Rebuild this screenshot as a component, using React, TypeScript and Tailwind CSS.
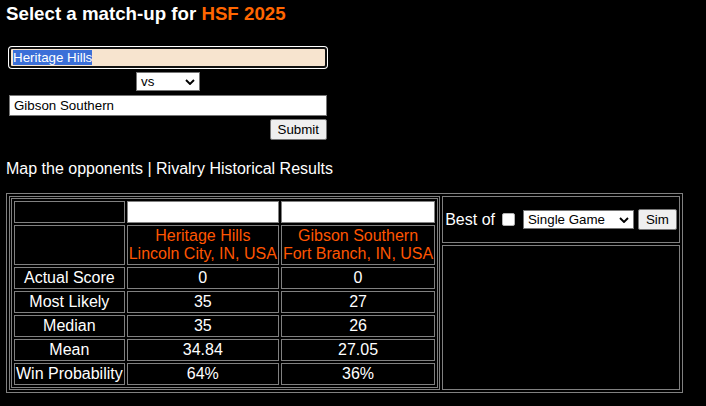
import React from 'react';

const teams = [
  { name: 'Heritage Hills', place: 'Lincoln City, IN, USA' },
  { name: 'Gibson Southern', place: 'Fort Branch, IN, USA' },
];

const stats = [
  ['Actual Score', '0', '0'],
  ['Most Likely', '35', '27'],
  ['Median', '35', '26'],
  ['Mean', '34.84', '27.05'],
  ['Win Probability', '64%', '36%'],
];

const Chevron = () => (
  <svg width="10" height="6" viewBox="0 0 10 6" className="pointer-events-none absolute right-[4px] top-1/2 -translate-y-1/2">
    <path d="M1 1 L5 5 L9 1" fill="none" stroke="#000" strokeWidth="1.9" />
  </svg>
);

const FakeSelect = ({ label, width }: { label: string; width: string }) => (
  <div className={`relative h-[19px] ${width} border border-[#767676] bg-white text-black text-[13.333px] leading-[17px] pl-[4px]`}>
    {label}
    <Chevron />
  </div>
);

const Button = ({ label }: { label: string }) => (
  <button className="block h-[21px] px-[7px] border border-[#767676] rounded-[2px] bg-[#efefef] text-black text-[13.333px] leading-[17px]">
    {label}
  </button>
);

const cell = 'border border-[#808080] p-px';

const App = () => {
  return (
    <div className="w-[706px] h-[406px] overflow-hidden bg-black text-white font-['Liberation_Sans',Arial,sans-serif] pl-[6px]">
      <h3 className="pt-[3px] text-[18.72px] leading-[22px] font-bold">
        Select a match-up for <span className="text-[#ff6600]">HSF 2025</span>
      </h3>

      <form className="ml-[3px] mt-[22px] w-[318px] flex flex-col" onSubmit={(e) => e.preventDefault()}>
        <div className="h-[21px] border-2 border-[#101010] rounded-[3px] ring-1 ring-white bg-[#f7e4cf] text-[13.333px] leading-[16px] pl-[2px] pt-px text-white">
          <span className="bg-[#3b6fd8]">Heritage Hills</span>
        </div>
        <div className="mt-[4px] self-center flex">
          <FakeSelect label="vs" width="w-[64px]" />
        </div>
        <div className="mt-[4px] h-[21px] border border-[#767676] bg-white text-black text-[13.333px] leading-[17px] pl-[4px] pt-px">
          Gibson Southern
        </div>
        <div className="mt-[3px] self-end flex">
          <Button label="Submit" />
        </div>
      </form>

      <div className="mt-[20px] text-[16px] leading-[18px]">
        Map the opponents | Rivalry Historical Results
      </div>

      <table className="mt-[15px] border-separate border-spacing-[2px] border border-[#808080] text-[16px] leading-[18px]">
        <tbody>
          <tr>
            <td rowSpan={2} className="border border-[#808080] p-px align-top">
              <table className="border-separate border-spacing-[2px] border border-[#808080] text-center">
                <tbody>
                  <tr>
                    <td className={`${cell} h-[22px]`}></td>
                    <td className={`${cell} bg-white`}></td>
                    <td className={`${cell} bg-white`}></td>
                  </tr>
                  <tr>
                    <td className={cell}></td>
                    {teams.map((t) => (
                      <td key={t.name} className={`${cell} text-[#ff5500] whitespace-nowrap`}>
                        {t.name}
                        <br />
                        {t.place}
                      </td>
                    ))}
                  </tr>
                  {stats.map((row) => (
                    <tr key={row[0]}>
                      {row.map((v, i) => (
                        <td key={i} className={`${cell} whitespace-nowrap`}>
                          {v}
                        </td>
                      ))}
                    </tr>
                  ))}
                </tbody>
              </table>
            </td>
            <td className="border border-[#808080] p-px h-[47px] align-middle">
              <div className="flex items-center whitespace-nowrap pl-px pr-px">
                <span>Best of</span>
                <span className="ml-[7px] w-[13px] h-[13px] rounded-[2px] border border-[#b0b0b0] bg-white"></span>
                <div className="ml-[8px] flex">
                  <FakeSelect label="Single Game" width="w-[111px]" />
                </div>
                <div className="ml-[4px] flex">
                  <Button label="Sim" />
                </div>
              </div>
            </td>
          </tr>
          <tr>
            <td className="border border-[#808080] p-px"></td>
          </tr>
        </tbody>
      </table>
    </div>
  );
};

export default App;
